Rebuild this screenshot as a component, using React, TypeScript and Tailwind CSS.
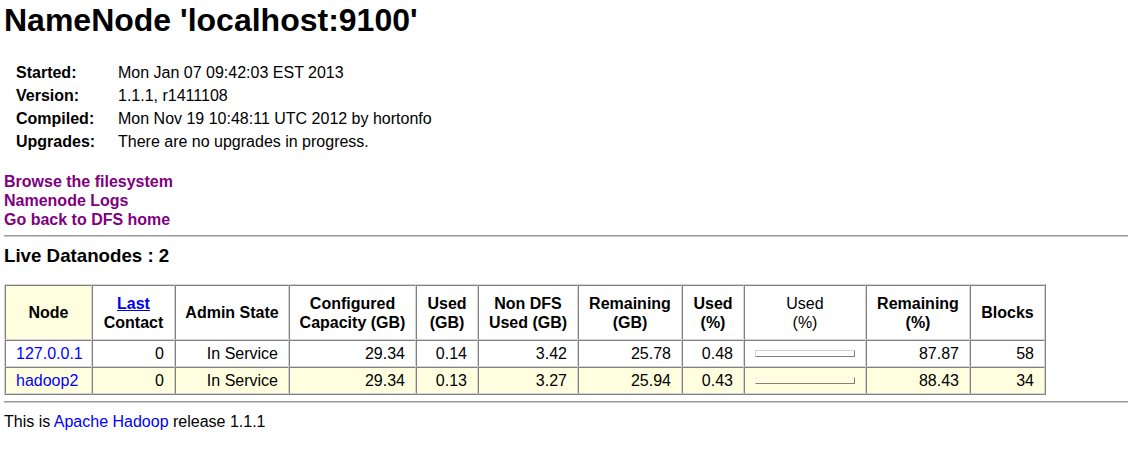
const info = [
  ["Started:", "Mon Jan 07 09:42:03 EST 2013"],
  ["Version:", "1.1.1, r1411108"],
  ["Compiled:", "Mon Nov 19 10:48:11 UTC 2012 by hortonfo"],
  ["Upgrades:", "There are no upgrades in progress."],
];

interface NodeRow {
  name: string;
  last: string;
  state: string;
  capacity: string;
  used: string;
  nonDfs: string;
  remaining: string;
  usedPct: string;
  remainingPct: string;
  blocks: string;
}

const nodes: NodeRow[] = [
  { name: "127.0.0.1", last: "0", state: "In Service", capacity: "29.34", used: "0.14", nonDfs: "3.42", remaining: "25.78", usedPct: "0.48", remainingPct: "87.87", blocks: "58" },
  { name: "hadoop2", last: "0", state: "In Service", capacity: "29.34", used: "0.13", nonDfs: "3.27", remaining: "25.94", usedPct: "0.43", remainingPct: "88.43", blocks: "34" },
];

const th = "border border-t-[#808080] border-l-[#808080] border-r-[#d4d4d4] border-b-[#d4d4d4] px-[2px] h-[55px] font-bold text-center align-middle leading-[19px] whitespace-nowrap";
const td = "border border-t-[#808080] border-l-[#808080] border-r-[#d4d4d4] border-b-[#d4d4d4] px-[10px] h-[27px] py-0 align-middle leading-[19px] whitespace-nowrap";

export default function App() {
  return (
    <div className="pl-[4px] text-[16px] text-black bg-white font-['Liberation_Sans',Arial,sans-serif] min-h-[459px]">
      <h1 className="text-[32px] font-bold leading-[37px] pt-[2px]">NameNode 'localhost:9100'</h1>

      <div className="mt-[22px] pl-[12px] grid grid-cols-[102px_auto] leading-[23px]">
        {info.map(([k, v]) => (
          <div key={k} className="contents">
            <span className="font-bold">{k}</span>
            <span>{v}</span>
          </div>
        ))}
      </div>

      <div className="mt-[19px] flex flex-col leading-[19px] font-bold text-[#800080]">
        <a href="#">Browse the filesystem</a>
        <a href="#">Namenode Logs</a>
        <a href="#">Go back to DFS home</a>
      </div>

      <div className="mt-[6px] h-[2px] border-t border-b border-t-[#9a9a9a] border-b-[#c8c8c8]" />

      <div className="mt-[8px] text-[18.72px] font-bold leading-[22px]">Live Datanodes : 2</div>

      <table className="mt-[17px] table-fixed w-[1042px] border-separate border-spacing-0 border border-t-[#d4d4d4] border-l-[#d4d4d4] border-r-[#808080] border-b-[#808080]">
        <thead>
          <tr>
            <th className={`${th} w-[87px] bg-[#ffffe0]`}>Node</th>
            <th className={`${th} w-[83px]`}>
              <a href="#" className="text-[#0000ee] underline">Last</a>
              <br />
              Contact
            </th>
            <th className={`${th} w-[114px]`}>Admin State</th>
            <th className={`${th} w-[127px]`}>Configured<br />Capacity (GB)</th>
            <th className={`${th} w-[62px]`}>Used<br />(GB)</th>
            <th className={`${th} w-[100px]`}>Non DFS<br />Used (GB)</th>
            <th className={`${th} w-[104px]`}>Remaining<br />(GB)</th>
            <th className={`${th} w-[62px]`}>Used<br />(%)</th>
            <th className={`${th} w-[122px] !font-normal`}>Used<br />(%)</th>
            <th className={`${th} w-[104px]`}>Remaining<br />(%)</th>
            <th className={`${th} w-[75px]`}>Blocks</th>
          </tr>
        </thead>
        <tbody>
          {nodes.map((n, i) => {
            const bg = i === 1 ? "bg-[#ffffe0]" : "bg-white";
            return (
              <tr key={n.name} className={bg}>
                <td className={`${td} text-left`}>
                  <a href="#" className="text-[#0000ff]">{n.name}</a>
                </td>
                <td className={`${td} text-right`}>{n.last}</td>
                <td className={`${td} text-right`}>{n.state}</td>
                <td className={`${td} text-right`}>{n.capacity}</td>
                <td className={`${td} text-right`}>{n.used}</td>
                <td className={`${td} text-right`}>{n.nonDfs}</td>
                <td className={`${td} text-right`}>{n.remaining}</td>
                <td className={`${td} text-right`}>{n.usedPct}</td>
                <td className={`${td} text-left`}>
                  <div
                    className={`w-[100px] h-[7px] border border-r-[#808080] border-b-[#808080] ${
                      i === 1 ? "border-t-[#f4f4e8] border-l-[#f4f4e8]" : "border-t-[#d0d0d0] border-l-[#d0d0d0]"
                    }`}
                  />
                </td>
                <td className={`${td} text-right`}>{n.remainingPct}</td>
                <td className={`${td} text-right`}>{n.blocks}</td>
              </tr>
            );
          })}
        </tbody>
      </table>

      <div className="mt-[6px] h-[2px] border-t border-b border-t-[#9a9a9a] border-b-[#c8c8c8]" />

      <div className="mt-[10px] leading-[18px]">
        This is <a href="#" className="text-[#0000ff]">Apache Hadoop</a> release 1.1.1
      </div>
    </div>
  );
}
